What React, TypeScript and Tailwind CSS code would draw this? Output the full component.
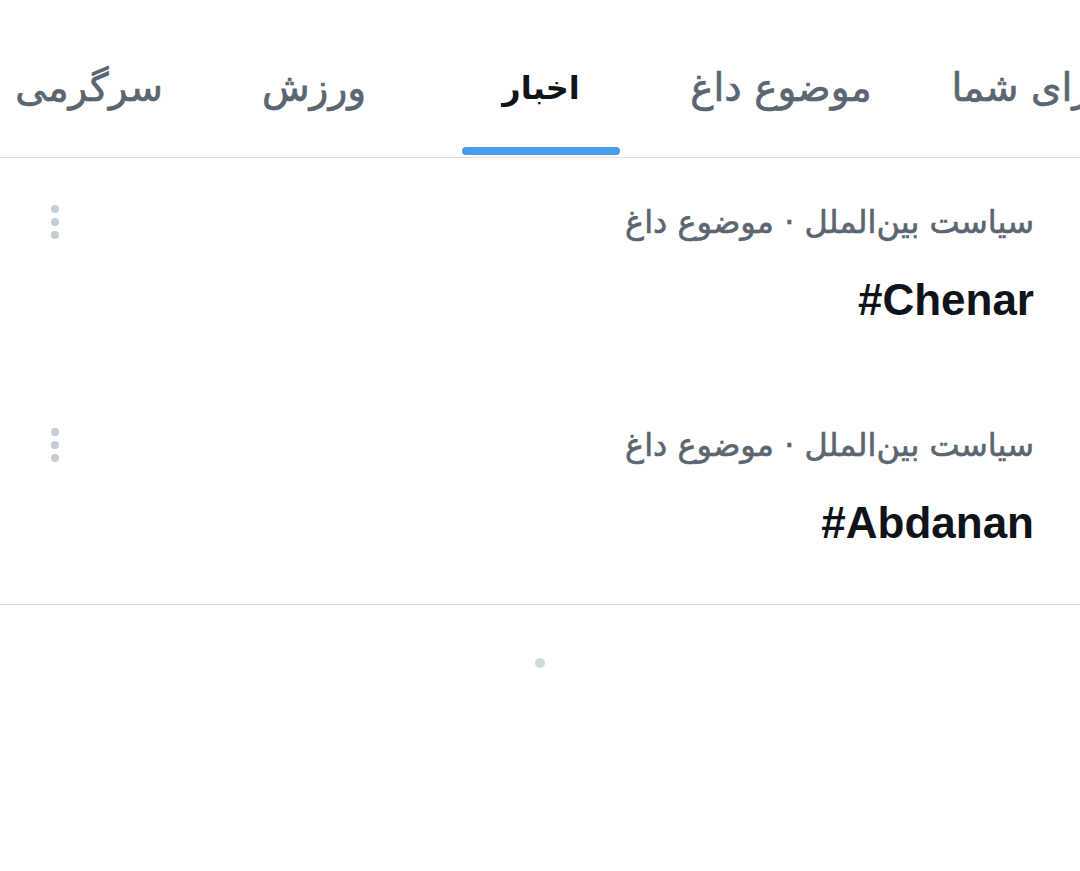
const tabs = [
  { label: "سرگرمی", width: "w-[224px]", active: false },
  { label: "ورزش", width: "w-[226px]", active: false },
  { label: "اخبار", width: "w-[228px]", active: true },
  { label: "موضوع داغ", width: "w-[252px]", active: false },
  { label: "برای شما", width: "w-[242px]", active: false },
];

const trends = [
  { meta: "سیاست بین‌الملل · موضوع داغ", tag: "#Chenar" },
  { meta: "سیاست بین‌الملل · موضوع داغ", tag: "#Abdanan" },
];

const arabic = "font-['DejaVu_Sans','Noto_Sans',sans-serif]";

const MoreDots = () => (
  <div className="flex flex-col items-center gap-[5px] w-[10px]">
    <span className="block w-[8px] h-[8px] rounded-full bg-[#c5ced6]" />
    <span className="block w-[8px] h-[8px] rounded-full bg-[#c5ced6]" />
    <span className="block w-[8px] h-[8px] rounded-full bg-[#c5ced6]" />
  </div>
);

export default function App() {
  return (
    <div className="w-[1080px] h-[871px] bg-white overflow-hidden">
      {/* tabs */}
      <div className="w-full overflow-hidden border-b border-[#dcdfe2]">
        <div className="flex -ml-[23px] h-[157px]">
          {tabs.map((t) => (
            <div
              key={t.label}
              className={`${t.width} shrink-0 flex flex-col items-center justify-end`}
            >
              <div
                dir="rtl"
                className={`${arabic} leading-[40px] whitespace-nowrap ${
                  t.active
                    ? "text-[32px] font-bold text-[#0f1419]"
                    : "text-[39px] text-[#5b6670] [-webkit-text-stroke:0.7px_#5b6670]"
                }`}
              >
                {t.label}
              </div>
              {t.active ? (
                <div className="mt-[39px] mb-[2px] w-[158px] h-[8px] rounded-full bg-[#4a9be8]" />
              ) : (
                <div className="mt-[39px] mb-[2px] h-[8px]" />
              )}
            </div>
          ))}
        </div>
      </div>

      {/* trends */}
      <div dir="rtl" className="border-b border-[#d6d9dc]">
        {trends.map((t) => (
          <div key={t.tag} className="pt-[40px] pb-[55px] pr-[46px] pl-[50px]">
            <div className="flex items-center justify-between h-[48px]">
              <div
                className={`${arabic} text-[32px] text-[#5b6670] whitespace-nowrap [-webkit-text-stroke:0.6px_#5b6670]`}
              >
                {t.meta}
              </div>
              <MoreDots />
            </div>
            <div
              dir="ltr"
              className="mt-[28px] h-[52px] flex items-center justify-end font-['Liberation_Sans',Arial,sans-serif] font-bold text-[44px] text-[#0f1419]"
            >
              {t.tag}
            </div>
          </div>
        ))}
      </div>

      {/* loading dot */}
      <div className="flex justify-center pt-[53px]">
        <span className="block w-[10px] h-[10px] rounded-full bg-[#cfd9de]" />
      </div>
    </div>
  );
}
